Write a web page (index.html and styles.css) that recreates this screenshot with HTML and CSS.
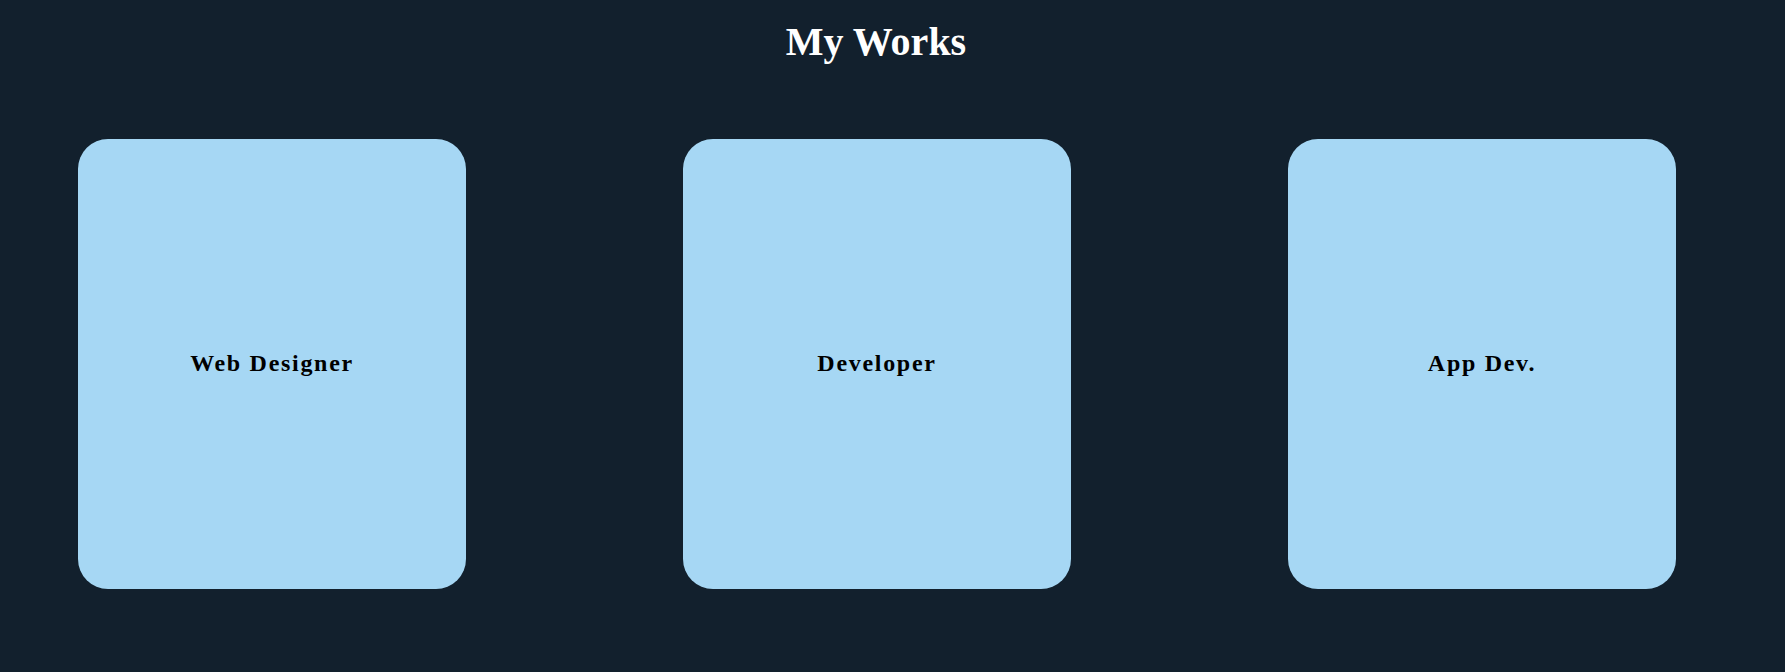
FILE: index.html
```html
<!DOCTYPE html>
<html lang="en">
<head>
  <meta charset="UTF-8">
  <title>My Works</title>
  <link rel="stylesheet" href="styles.css">
</head>
<body>

  <section class="works">
    <h1>My Works</h1>

    <div class="cards">
      <div class="card"><h3>Web Designer</h3></div>
      <div class="card"><h3>Developer</h3></div>
      <div class="card"><h3>App Dev.</h3></div>
    </div>
  </section>

</body>
</html>
```

FILE: styles.css
```css
* {
  margin: 0;
  padding: 0;
  box-sizing: border-box;
  font-family: "Liberation Serif", "Times New Roman", serif;
}

body {
  background-color: #12202d;
  min-height: 100vh;
}

.works {
  padding-right: 33px;
}

.works h1 {
  text-align: center;
  color: #fff;
  font-size: 40px;
  padding-top: 18px;
}

.cards {
  display: flex;
  gap: 217px;
  padding-left: 78px;
  margin-top: 74px;
}

.card {
  width: 388px;
  height: 450px;
  background-color: #a6d7f4;
  border-radius: 30px;
  display: flex;
  justify-content: center;
  align-items: center;
}

.card h3 {
  font-size: 24px;
  letter-spacing: 1.7px;
  color: #000;
  margin-top: -2px;
}
```
